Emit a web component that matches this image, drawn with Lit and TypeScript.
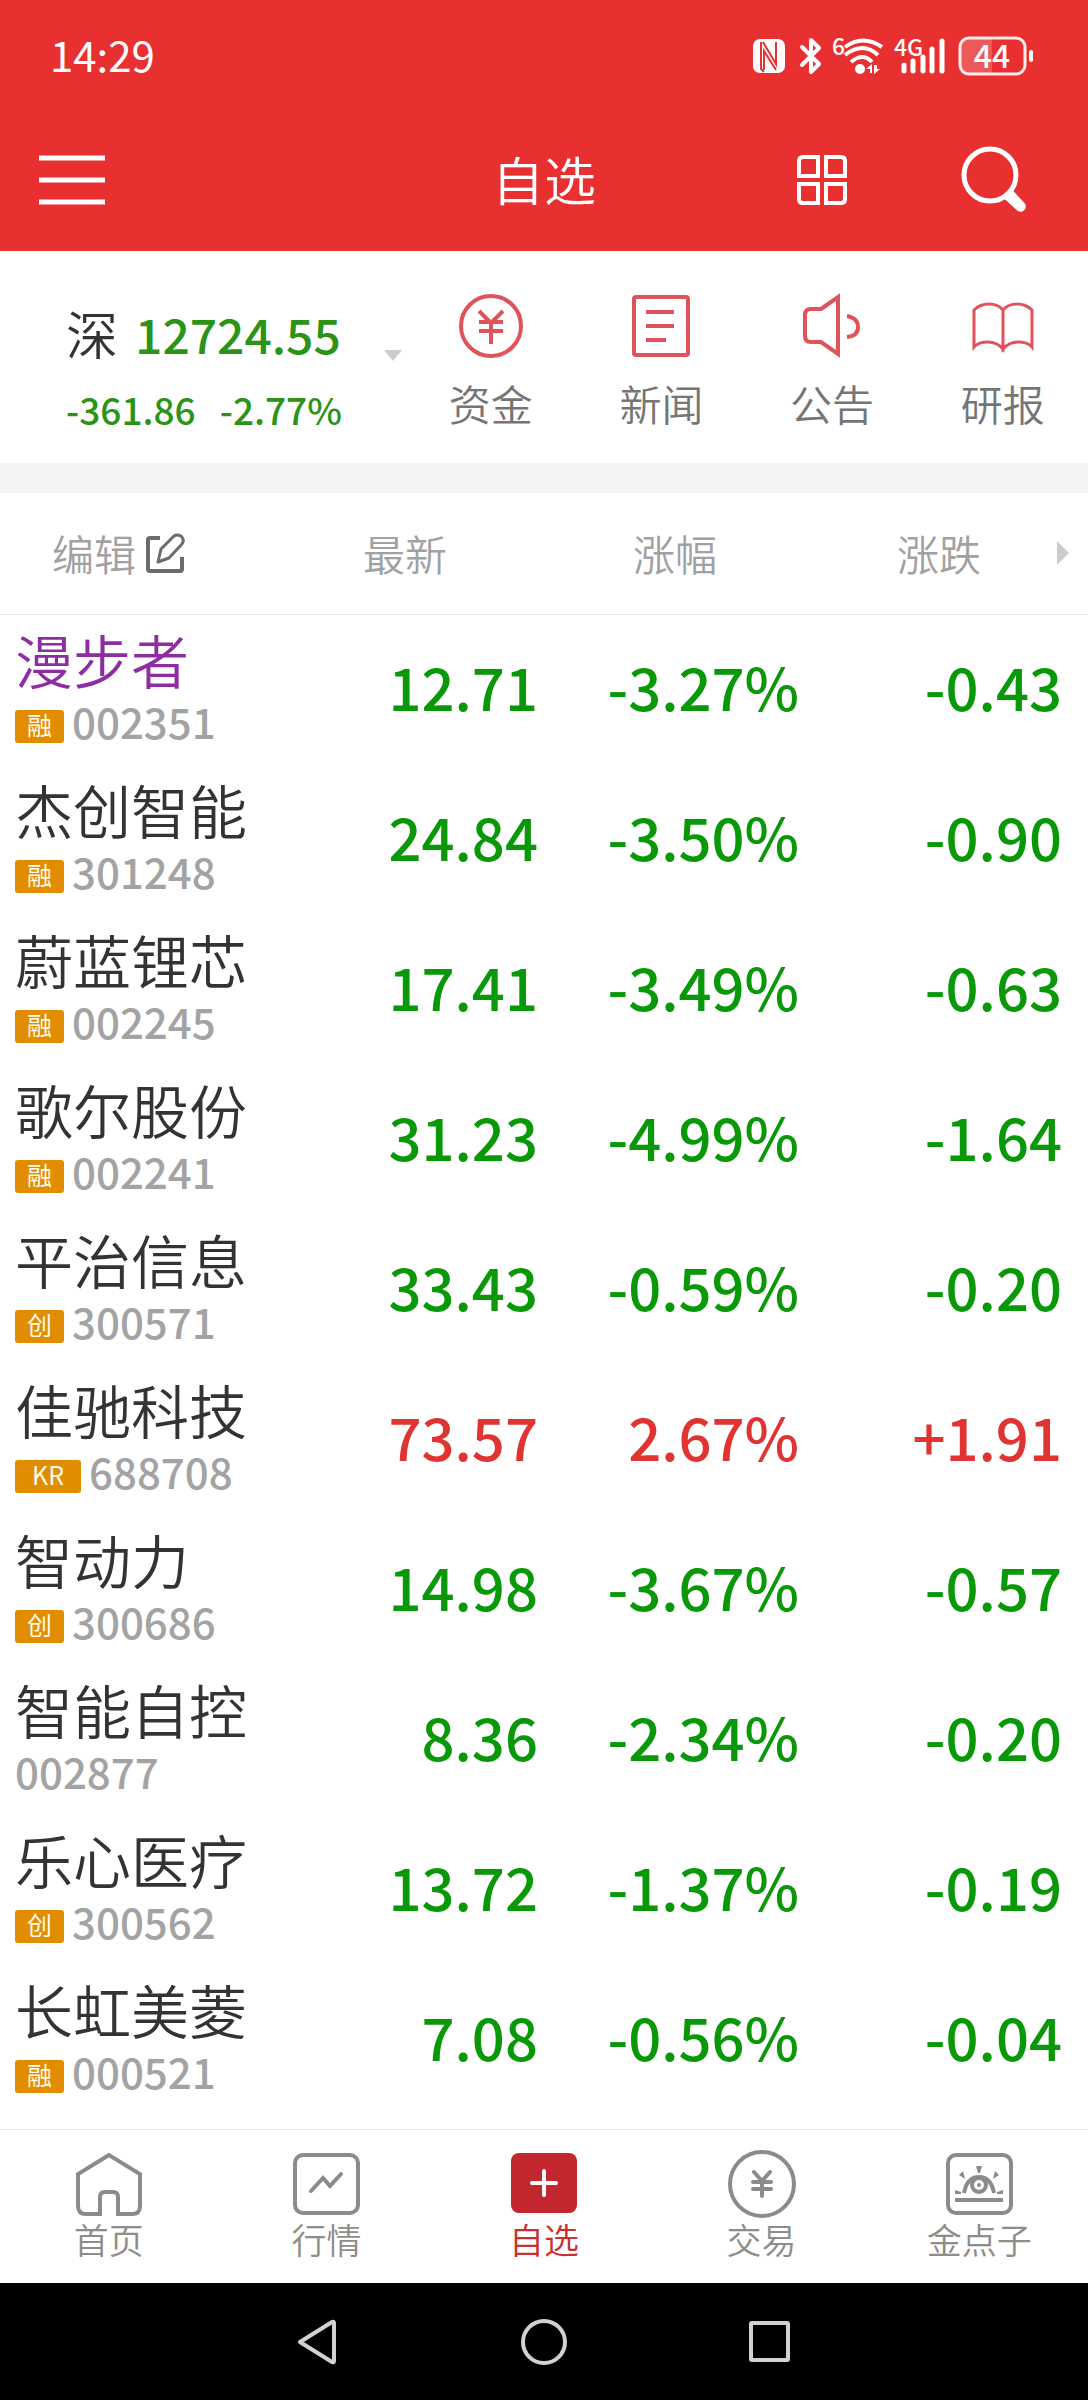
import { LitElement, html, css, svg, nothing } from "lit";
import { customElement, property, state } from "lit/decorators.js";
import { classMap } from "lit/directives/class-map.js";

interface Stock {
  name: string;
  code: string;
  tag?: string;
  price: string;
  percent: string;
  change: string;
  visited?: boolean;
}

const STOCKS: Stock[] = [
  { name: "漫步者", code: "002351", tag: "融", price: "12.71", percent: "-3.27%", change: "-0.43", visited: true },
  { name: "杰创智能", code: "301248", tag: "融", price: "24.84", percent: "-3.50%", change: "-0.90" },
  { name: "蔚蓝锂芯", code: "002245", tag: "融", price: "17.41", percent: "-3.49%", change: "-0.63" },
  { name: "歌尔股份", code: "002241", tag: "融", price: "31.23", percent: "-4.99%", change: "-1.64" },
  { name: "平治信息", code: "300571", tag: "创", price: "33.43", percent: "-0.59%", change: "-0.20" },
  { name: "佳驰科技", code: "688708", tag: "KR", price: "73.57", percent: "2.67%", change: "+1.91" },
  { name: "智动力", code: "300686", tag: "创", price: "14.98", percent: "-3.67%", change: "-0.57" },
  { name: "智能自控", code: "002877", price: "8.36", percent: "-2.34%", change: "-0.20" },
  { name: "乐心医疗", code: "300562", tag: "创", price: "13.72", percent: "-1.37%", change: "-0.19" },
  { name: "长虹美菱", code: "000521", tag: "融", price: "7.08", percent: "-0.56%", change: "-0.04" },
];

const fontStack = css`"Noto Sans CJK SC", "Noto Sans", sans-serif`;

const base = css`
  * {
    box-sizing: border-box;
  }
  button {
    margin: 0;
    padding: 0;
    border: 0;
    background: none;
    color: inherit;
    font: inherit;
    cursor: pointer;
  }
  a {
    color: inherit;
    text-decoration: none;
  }
  svg {
    display: block;
    flex: none;
    overflow: visible;
  }
`;

@customElement("status-bar")
export class StatusBar extends LitElement {
  static styles = [
    base,
    css`
      :host {
        display: flex;
        align-items: center;
        justify-content: space-between;
        height: 108px;
        padding: 0 54px 0 50px;
        color: #fff;
      }
      .time {
        font-size: 42px;
        line-height: 48px;
      }
      .icons {
        display: flex;
        align-items: center;
        padding-top: 4px;
      }
      .bluetooth {
        margin-left: 15px;
      }
      .wifi,
      .signal {
        margin-left: 10px;
      }
      .battery {
        margin-left: 12px;
      }
      .tiny {
        font-size: 23px;
        font-weight: 500;
        fill: #fff;
      }
      .level {
        font-size: 32px;
        font-weight: 500;
        fill: #fff;
        text-anchor: middle;
      }
    `,
  ];

  render() {
    return html`
      <time class="time">14:29</time>
      <div class="icons">
        <svg width="32" height="34" viewBox="0 0 32 34" aria-label="NFC">
          <rect width="32" height="34" rx="7" fill="#fff" />
          <path d="M8 3v27l3 3M10 3l13 22V3M11 31V12l12 19" fill="none" stroke="#e83030" stroke-width="2" />
        </svg>
        <svg class="bluetooth" width="22" height="36" viewBox="0 0 22 36" aria-label="蓝牙">
          <path d="M2 9l17 17-8 8V2l8 8L2 27" fill="none" stroke="#fff" stroke-width="4" stroke-linejoin="round" stroke-linecap="round" />
        </svg>
        <svg class="wifi" width="52" height="38" viewBox="0 0 52 38" aria-label="WLAN">
          <text class="tiny" x="0" y="18">6</text>
          <g fill="none" stroke="#fff" stroke-width="4">
            <path d="M13 10q18-13 37 0" />
            <path d="M13 18q18-14 33 0" />
            <path d="M19 25q12-10 21 0" />
          </g>
          <circle cx="28" cy="32" r="5" fill="#fff" />
          <path d="M34 32l6-5v9h-2v-4zM42 28v9l6-5h-3v-4z" fill="#fff" />
        </svg>
        <svg class="signal" width="52" height="38" viewBox="0 0 52 38" aria-label="4G">
          <text class="tiny" x="0" y="19">4G</text>
          <g stroke="#fff" stroke-width="5" stroke-linecap="round">
            <path d="M10 28v6M19 24v10M29 20v14M38 12v22M48 4v30" />
          </g>
        </svg>
        <svg class="battery" width="76" height="40" viewBox="0 0 76 40" aria-label="44%">
          <path d="M10 3h24v34H10q-7 0-7-7V10q0-7 7-7z" fill="#fff" fill-opacity=".2" />
          <rect x="2" y="2" width="65" height="36" rx="9" fill="none" stroke="#fff" stroke-width="3" stroke-opacity=".9" />
          <rect x="71" y="14" width="4" height="12" rx="2" fill="#fff" />
          <text class="level" x="34" y="32">44</text>
        </svg>
      </div>
    `;
  }
}

@customElement("title-bar")
export class TitleBar extends LitElement {
  static styles = [
    base,
    css`
      :host {
        display: grid;
        grid-template-columns: 1fr auto 1fr;
        align-items: center;
        height: 143px;
        color: #fff;
      }
      .title {
        margin: 0;
        padding-bottom: 2px;
        font-size: 52px;
        font-weight: 350;
        line-height: 60px;
      }
      .menu {
        justify-self: start;
        margin-left: 39px;
      }
      .tools {
        display: flex;
        align-items: center;
        justify-content: flex-end;
        gap: 114px;
        margin-right: 61px;
      }
    `,
  ];

  render() {
    return html`
      <button class="menu" aria-label="菜单">
        <svg width="66" height="50" viewBox="0 0 66 50">
          <path d="M0 3h66M0 25h66M0 47h66" stroke="#fff" stroke-width="5" />
        </svg>
      </button>
      <h1 class="title">自选</h1>
      <div class="tools">
        <button aria-label="宫格">
          <svg width="50" height="50" viewBox="0 0 50 50">
            <g fill="none" stroke="#fff" stroke-width="4">
              <path d="M6 2h15v19H2V6q0-4 4-4zM29 2h15q4 0 4 4v15H29zM2 29h19v19H6q-4 0-4-4zM29 29h19v15q0 4-4 4H29z" />
            </g>
          </svg>
        </button>
        <button aria-label="搜索">
          <svg width="66" height="68" viewBox="0 0 66 68">
            <circle cx="29" cy="29" r="26" fill="none" stroke="#fff" stroke-width="5" />
            <path d="M46 48l4-4 13 14q2 3-1 6-3 2-6-1L44 52z" fill="#fff" stroke="#fff" stroke-width="2" stroke-linejoin="round" />
          </svg>
        </button>
      </div>
    `;
  }
}

@customElement("market-summary")
export class MarketSummary extends LitElement {
  static styles = [
    base,
    css`
      :host {
        display: grid;
        grid-template-columns: 41fr 69fr;
        border-bottom: 30px solid #f4f4f4;
      }
      .index {
        display: flex;
        flex-direction: column;
        padding: 54px 4px 32px 66px;
        color: #2b9417;
        font-weight: 500;
        text-align: left;
      }
      .top {
        display: flex;
        align-items: flex-end;
        line-height: 56px;
      }
      .market {
        color: #333;
        font-size: 52px;
        font-weight: 350;
      }
      .value {
        flex: 1;
        margin-left: 17px;
        font-size: 48px;
      }
      .delta {
        display: flex;
        gap: 24px;
        margin-top: 26px;
        font-size: 37px;
        line-height: 44px;
      }
      .links {
        display: grid;
        grid-template-columns: repeat(4, 1fr);
      }
      .link {
        display: flex;
        flex-direction: column;
        align-items: center;
        gap: 19px;
        padding-top: 42px;
        color: #757575;
        font-size: 42px;
        font-weight: 350;
        line-height: 50px;
      }
      .art {
        fill: none;
        stroke: #df535b;
        stroke-width: 3;
      }
    `,
  ];

  private links = [
    {
      label: "资金",
      art: svg`<circle cx="33" cy="33" r="30" stroke-width="4" /><path d="M21 18l12 12 12-12M21 29h24M21 38h24M33 30v21" stroke-width="4" />`,
    },
    {
      label: "新闻",
      art: svg`<rect x="6" y="4" width="54" height="58" rx="2" stroke-width="4" /><path d="M18 19h28M18 33h28M18 47h20" stroke-width="4" />`,
    },
    {
      label: "公告",
      art: svg`<path d="M22 16L39 4v57L22 49h-10q-6 0-6-6V22q0-6 6-6z" stroke-width="4" /><path d="M48 23q11 2 11 11t-11 10" stroke-width="4" />`,
    },
    {
      label: "研报",
      art: svg`<path d="M33 17q-5-6-14-6-9 0-15 6v37q4-5 14-5 9 0 15 7zM33 17q5-6 14-6 9 0 15 6v37q-4-5-14-5-9 0-15 7z" />`,
    },
  ];

  render() {
    return html`
      <button class="index">
        <span class="top">
          <span class="market">深</span>
          <span class="value">12724.55</span>
          <svg width="18" height="11" viewBox="0 0 18 11" aria-hidden="true"><path d="M0 0h18L9 11z" fill="#ccc" /></svg>
        </span>
        <span class="delta"><span>-361.86</span><span>-2.77%</span></span>
      </button>
      <nav class="links">
        ${this.links.map(
          (l) => html`<a class="link" href="#">
            <svg class="art" width="66" height="66" viewBox="0 0 66 66" aria-hidden="true">${l.art}</svg>
            <span>${l.label}</span>
          </a>`
        )}
      </nav>
    `;
  }
}

@customElement("stock-table")
export class StockTable extends LitElement {
  @property({ attribute: false }) stocks: Stock[] = [];

  static styles = [
    base,
    css`
      :host {
        display: block;
        padding-bottom: 14px;
      }
      .table {
        width: 100%;
        border-collapse: separate;
        border-spacing: 0;
        table-layout: fixed;
      }
      .name-col {
        width: 28%;
      }
      .price-col {
        width: 22%;
      }
      .percent-col {
        width: 24%;
      }
      .change-col {
        width: 26%;
      }
      .head {
        height: 122px;
        padding: 0 0 2px;
        border-bottom: 1px solid #ebebeb;
        color: #a1a1a1;
        font-size: 42px;
        font-weight: 350;
        line-height: 50px;
        text-align: right;
      }
      .head.first {
        padding-left: 52px;
      }
      .head.price {
        padding-right: 97px;
      }
      .head.percent {
        padding-right: 88px;
      }
      .head.last {
        padding-right: 19px;
      }
      .edit,
      .more {
        display: flex;
        align-items: center;
      }
      .edit {
        gap: 10px;
      }
      .more {
        justify-content: flex-end;
        gap: 76px;
      }
      .stock,
      .num {
        height: 150px;
        padding: 0;
      }
      .stock {
        padding: 15px 0 22px 15px;
        font-weight: 350;
        text-align: left;
        vertical-align: top;
      }
      .name {
        display: block;
        color: #333;
        font-size: 58px;
        line-height: 58px;
        white-space: nowrap;
      }
      .name.visited {
        color: #8e2ca4;
      }
      .meta {
        display: flex;
        align-items: flex-start;
        gap: 8px;
        height: 42px;
        margin-top: 13px;
      }
      .tag {
        align-self: flex-end;
        height: 33px;
        padding: 0 12px;
        border-radius: 3px;
        background: #e28c00;
        color: #fffbe6;
        font-size: 25px;
        font-weight: 400;
        line-height: 29px;
      }
      .tag.wide {
        padding: 0 17px;
      }
      .code {
        color: #a3a3a3;
        font-size: 42px;
        font-weight: 500;
        line-height: 40px;
      }
      .num {
        padding: 0 6px 8px 0;
        color: #089808;
        font-size: 58px;
        font-weight: 500;
        line-height: 60px;
        text-align: right;
        white-space: nowrap;
      }
      .num.last {
        padding-right: 26px;
      }
      .num.up {
        color: #df3432;
      }
    `,
  ];

  private row(s: Stock) {
    const up = !s.change.startsWith("-");
    const num = classMap({ num: true, up });
    return html`
      <tr>
        <th class="stock" scope="row">
          <span class=${classMap({ name: true, visited: !!s.visited })}>${s.name}</span>
          <span class="meta">
            ${s.tag
              ? html`<span class=${classMap({ tag: true, wide: s.tag.length > 1 })}>${s.tag}</span>`
              : nothing}
            <span class="code">${s.code}</span>
          </span>
        </th>
        <td class=${num}>${s.price}</td>
        <td class=${classMap({ num: true, up })}>${s.percent}</td>
        <td class=${classMap({ num: true, up, last: true })}>${s.change}</td>
      </tr>
    `;
  }

  render() {
    return html`
      <table class="table">
        <colgroup>
          <col class="name-col" />
          <col class="price-col" />
          <col class="percent-col" />
          <col class="change-col" />
        </colgroup>
        <thead>
          <tr>
            <th class="head first" scope="col">
              <button class="edit">
                编辑
                <svg width="40" height="40" viewBox="0 0 40 40" fill="none" stroke="#6b6b6b" stroke-width="4" aria-hidden="true">
                  <path d="M14 5H4q-2 0-2 2v29q0 2 2 2h30q2 0 2-2V24" />
                  <path d="M12 29l3-13L28 3q3-2 7 0 4 4 1 8L23 25z" stroke-width="3" stroke-linejoin="round" />
                </svg>
              </button>
            </th>
            <th class="head price" scope="col">最新</th>
            <th class="head percent" scope="col">涨幅</th>
            <th class="head last" scope="col">
              <span class="more">
                涨跌
                <svg width="12" height="24" viewBox="0 0 12 24" aria-hidden="true"><path d="M0 0l12 12L0 24z" fill="#ccc" /></svg>
              </span>
            </th>
          </tr>
        </thead>
        <tbody>
          ${this.stocks.map((s) => this.row(s))}
        </tbody>
      </table>
    `;
  }
}

@customElement("tab-bar")
export class TabBar extends LitElement {
  @state() private active = "自选";

  static styles = [
    base,
    css`
      :host {
        display: block;
        border-top: 1px solid #ebebeb;
      }
      .tabs {
        display: grid;
        grid-template-columns: repeat(5, 1fr);
      }
      .tab {
        display: flex;
        flex-direction: column;
        align-items: center;
        gap: 1px;
        padding: 20px 0 24px;
        color: #8d8d8b;
        font-size: 35px;
        font-weight: 350;
        line-height: 40px;
      }
      .tab.active {
        color: #c9302f;
      }
      .art {
        fill: none;
        stroke: #8b8b89;
        stroke-width: 4;
      }
    `,
  ];

  private tabs = [
    {
      label: "首页",
      art: svg`<path d="M34 5L3 24v32q0 8 8 8h14V47q0-5 5-5h8q5 0 5 5v17h14q8 0 8-8V24z" />`,
    },
    {
      label: "行情",
      art: svg`<rect x="3" y="5" width="63" height="58" rx="8" /><path d="M19 41l12-13 7 8 11-12" stroke-linecap="round" />`,
    },
    {
      label: "自选",
      art: svg`<rect x="1" y="3" width="66" height="60" rx="8" fill="#c1272d" stroke="none" /><path d="M34 21v24M22 33h24" stroke="#fff" stroke-linecap="round" />`,
    },
    {
      label: "交易",
      art: svg`<circle cx="34" cy="34" r="32" /><path d="M26 22l8 9 8-9M25 32h18M25 39h18M34 31v15" stroke-linecap="round" />`,
    },
    {
      label: "金点子",
      art: svg`<rect x="3" y="5" width="63" height="58" rx="8" /><path d="M10 50h48" /><path d="M19 43q3-16 15-16t15 16" /><circle cx="34" cy="35" r="7" /><g fill="#8b8b89" stroke="none"><circle cx="34" cy="35" r="2" /><path d="M31 16h6l-2 7h-2zM18 21l-4 4 6 4zM50 21l4 4-6 4zM10 40l6 2v2h-6zM58 40l-6 2v2h6z" /></g>`,
    },
  ];

  render() {
    return html`
      <nav class="tabs">
        ${this.tabs.map(
          (t) => html`<button class=${classMap({ tab: true, active: t.label === this.active })} @click=${() => (this.active = t.label)}>
            <svg class="art" width="68" height="68" viewBox="0 0 68 68" aria-hidden="true">${t.art}</svg>
            <span>${t.label}</span>
          </button>`
        )}
      </nav>
    `;
  }
}

@customElement("system-bar")
export class SystemBar extends LitElement {
  static styles = [
    base,
    css`
      :host {
        display: flex;
        align-items: center;
        justify-content: center;
        gap: 180px;
        height: 117px;
        background: #000;
      }
      .art {
        fill: none;
        stroke: #d2d2d2;
        stroke-width: 4;
        stroke-linejoin: round;
      }
    `,
  ];

  render() {
    return html`
      <button aria-label="返回">
        <svg class="art" width="46" height="46" viewBox="0 0 46 46"><path d="M5 23L37 3q2-1 2 1v38q0 2-2 1z" /></svg>
      </button>
      <button aria-label="主屏幕">
        <svg class="art" width="46" height="46" viewBox="0 0 46 46"><circle cx="23" cy="23" r="21" /></svg>
      </button>
      <button aria-label="最近任务">
        <svg class="art" width="46" height="46" viewBox="0 0 46 46"><rect x="4" y="4" width="37" height="37" rx="1" /></svg>
      </button>
    `;
  }
}

@customElement("app-root")
export class AppRoot extends LitElement {
  static styles = css`
    :host {
      display: block;
      background: #fff;
      font-family: ${fontStack};
    }
    .header {
      background: #e83030;
    }
  `;

  render() {
    return html`
      <header class="header">
        <status-bar></status-bar>
        <title-bar></title-bar>
      </header>
      <main>
        <market-summary></market-summary>
        <stock-table .stocks=${STOCKS}></stock-table>
      </main>
      <tab-bar></tab-bar>
      <system-bar></system-bar>
    `;
  }
}
